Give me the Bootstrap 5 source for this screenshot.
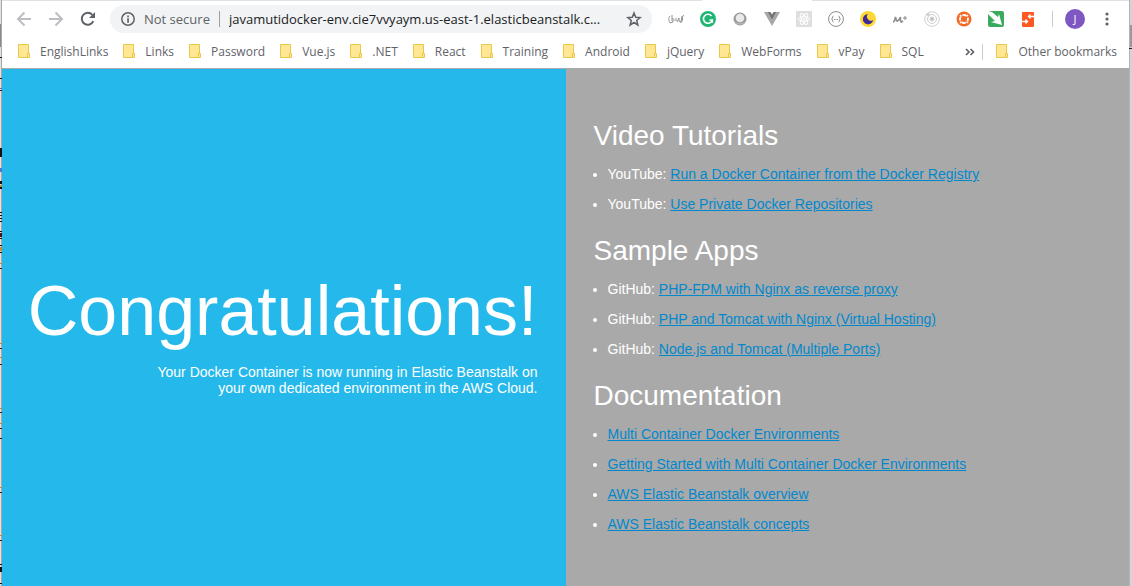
<!DOCTYPE html>
<html lang="en">
<head>
<meta charset="utf-8">
<meta name="viewport" content="width=device-width, initial-scale=1">
<title>Congratulations</title>
<link href="https://cdn.jsdelivr.net/npm/bootstrap@5.3.0/dist/css/bootstrap.min.css" rel="stylesheet">
<style>
  body { font-family: "Liberation Sans", Arial, sans-serif; font-size: 14px; line-height: 16px; background: #dcdcdc; }
  .edge { width: 2px; overflow: hidden; }
  .edge-left { background: linear-gradient(90deg, #e2e2e2 50%, #a8a8a8 50%); }
  .edge-right { width: 3px; background: linear-gradient(90deg, #b4b4b4 1px, #d4d4d4 1px); }
  .edge svg { display: block; }
  .chrome { font-family: "Open Sans", "Noto Sans", sans-serif; border-bottom: 1px solid #a9a9a9; color: #5f6368; }
  .tabs { height: 1px; background: #dee1e6; }
  .tabs span { width: 110px; margin-right: 317px; background: #fff; }
  .toolbar { height: 36px; padding-left: 14px; padding-right: 14px; }
  .bar-btn { width: 16px; height: 16px; border: 0; padding: 0; background: none; display: flex; color: #5f6368; flex: none; }
  .bar-btn:disabled { color: #bcbec1; }
  .nav-group { gap: 16px; }
  .omnibox { height: 28px; border-radius: 14px; background: #f1f3f4; margin-left: 14px; padding: 0 10px; font-size: 13px; }
  .omnibox .rule { width: 1px; height: 16px; background: #9aa0a6; margin: 0 9px; }
  .omnibox input { border: 0; padding: 0; background: none; color: #202124; min-width: 0; outline: 0; }
  .exts { gap: 16px; margin-left: 16px; }
  .vline { width: 1px; height: 16px; background: #c8cacd; }
  .avatar { width: 20px; height: 20px; border-radius: 50%; border: 0; padding: 0; background: #7e57c2; color: #fff; font-size: 11px; line-height: 20px; margin: 0 14px 0 12px; }
  .marks { height: 30px; padding: 0 12px 0 15px; font-size: 12px; margin-bottom: 1px; }
  .marks a { color: #5f6368; text-decoration: none; gap: 9px; }
  .marks-list { gap: 14px; }
  .folder { width: 14px; height: 14px; flex: none; }
  .hero { background: #24b8eb; padding: 12px 28px 0; }
  .hero h1 { font-size: 70px; line-height: 80px; margin-bottom: 13px; font-weight: 400; }
  .hero p { max-width: 392px; }
  .info { background: #a9a9a9; padding: 50px 28px 28px; }
  .info h2 { font-size: 28px; line-height: 34px; font-weight: 400; margin: 0 0 13px; }
  .info ul { padding-left: 14px; margin: 0 0 22px; }
  .info li + li { margin-top: 14px; }
  .info a { color: #0188cc; }
</style>
</head>
<body class="d-flex min-vh-100">
<svg width="0" height="0" class="position-absolute" aria-hidden="true">
  <symbol id="folder" viewBox="0 0 14 14"><path d="M1.500 .5h10v9h1v4h-11z" fill="#ffe794" stroke="#e8c74b"/><path d="M10.500 13V9.500h1" fill="none" stroke="#e8c74b"/></symbol>
</svg>

<div class="edge edge-left flex-shrink-0" aria-hidden="true">
  <svg width="2" height="586" shape-rendering="crispEdges">
    <path fill="#8a8a8a" d="M0 24h1v23h-1z"/>
    <path fill="#111" d="M0 57h2v1h-2zM0 78h2v1h-2zM0 148h2v9h-2zM0 181h2v3h-2zM0 187h2v2h-2zM0 212h2v1h-2zM0 215h2v1h-2zM0 218h2v1h-2zM0 221h2v1h-2zM0 231h2v1h-2zM0 238h2v1h-2zM0 245h2v1h-2zM0 252h2v1h-2zM0 438h2v1h-2zM0 564h2v1h-2zM0 567h2v5h-2zM0 583h2v1h-2z"/>
    <path fill="#501018" d="M0 90h2v1h-2zM0 233h2v4h-2zM0 268h2v1h-2zM0 348h2v1h-2zM0 364h2v1h-2zM0 412h2v1h-2zM0 428h2v1h-2zM0 492h2v1h-2zM0 540h2v1h-2z"/>
    <path fill="#c98a2c" d="M0 185h2v2h-2zM0 247h2v4h-2zM0 263h2v1h-2zM0 343h2v1h-2zM0 357h2v1h-2zM0 408h2v1h-2zM0 423h2v1h-2zM0 487h2v1h-2zM0 535h2v1h-2z"/>
    <path fill="#4a7ad0" d="M0 88h2v1h-2zM0 168h2v4h-2z"/>
  </svg>
</div>

<div class="flex-grow-1 d-flex flex-column overflow-hidden">
  <header class="chrome bg-white">
    <div class="tabs d-flex justify-content-end"><span></span></div>
    <div class="toolbar d-flex align-items-center">
      <div class="nav-group d-flex">
        <button class="bar-btn" disabled aria-label="Back"><svg width="16" height="16" fill="none" stroke="currentColor" stroke-width="2"><path d="M15 8H2.500M8.500 1.500L2 8l6.500 6.500"/></svg></button>
        <button class="bar-btn" disabled aria-label="Forward"><svg width="16" height="16" fill="none" stroke="currentColor" stroke-width="2"><path d="M1 8h12.500M7.500 1.500L14 8l-6.500 6.500"/></svg></button>
        <button class="bar-btn" aria-label="Reload"><svg width="16" height="16"><path d="M13.300 10.200A6 6 0 1 1 12.300 3.800" fill="none" stroke="currentColor" stroke-width="2"/><path d="M15 1v6H9z" fill="currentColor"/></svg></button>
      </div>
      <div class="omnibox flex-grow-1 d-flex align-items-center">
        <svg class="flex-shrink-0 me-2" width="16" height="16"><circle cx="8" cy="8" r="6.200" fill="none" stroke="#5f6368" stroke-width="1.500"/><path d="M7.200 4.500h1.700v1.700H7.200zM7.200 7.200h1.700v4.500H7.200z" fill="#5f6368"/></svg>
        <label for="url" class="text-nowrap">Not secure</label>
        <span class="rule flex-shrink-0"></span>
        <input id="url" class="flex-grow-1" type="text" value="javamutidocker-env.cie7vvyaym.us-east-1.elasticbeanstalk.c...">
        <button class="bar-btn ms-2" aria-label="Bookmark this page"><svg width="16" height="16" fill="none" stroke="currentColor" stroke-width="1.500"><path d="M8 2l1.700 4.300 4.500.3-3.500 2.900 1.200 4.500L8 11.500 4.100 14l1.200-4.500L1.800 6.600l4.500-.3z"/></svg></button>
      </div>
      <div class="exts d-flex align-items-center">
        <button class="bar-btn" aria-label="JSON viewer"><svg width="16" height="16" fill="none" stroke="#8e8e8e"><path d="M2 5c-2 2-1 5 0 7M4 4v6c1 1 2 0 2-1S5 7 4 8M8 7v3M9 11l2-4M11 7v3l2 1 1-6M15.500 4c-1 2-1 2-1 4s-1 3-2 4M2 12l3-1"/></svg></button>
        <button class="bar-btn" aria-label="Grammar checker"><svg width="16" height="16"><circle cx="8" cy="8" r="8" fill="#1fb573"/><path d="M11.500 5A4.500 4.500 0 1 0 12.300 9H9.500M12.300 8.500v3.200" fill="none" stroke="#fff" stroke-width="1.600"/></svg></button>
        <button class="bar-btn" aria-label="Colour picker"><svg width="16" height="16"><circle cx="8" cy="8" r="6.500" fill="#999"/><circle cx="8" cy="7" r="4.300" fill="#e9e9e9"/><path d="M2.500 10a6 6 0 0 0 11 0c-3 3-8 3-11 0" fill="#b9b9b9"/></svg></button>
        <button class="bar-btn" aria-label="Vue devtools"><svg width="16" height="16"><path d="M0 1h3.500L8 9l4.500-8H16L8 15z" fill="#a7a7a7"/><path d="M3.500 1h3L8 3.600 9.500 1h3L8 9z" fill="#747474"/></svg></button>
        <button class="bar-btn" aria-label="React devtools"><svg width="16" height="16"><path d="M0 0h16v16H0z" fill="#dedede"/><g fill="none" stroke="#fff"><ellipse cx="8" cy="8" rx="6" ry="2.300"/><ellipse cx="8" cy="8" rx="6" ry="2.300" transform="rotate(60 8 8)"/><ellipse cx="8" cy="8" rx="6" ry="2.300" transform="rotate(120 8 8)"/></g><circle cx="8" cy="8" r="1" fill="#fff"/></svg></button>
        <button class="bar-btn" aria-label="JSON formatter"><svg width="16" height="16" fill="none" stroke="#8a8a8a"><circle cx="8" cy="8" r="7.400"/><path d="M5.500 5Q4.500 5 4.500 7L3.500 8l1 1q0 2 1 2M10.500 5q1 0 1 2l1 1-1 1q0 2-1 2"/><path d="M6 8.500h4" stroke-dasharray="1 .5"/></svg></button>
        <button class="bar-btn" aria-label="Dark mode"><svg width="16" height="16"><circle cx="8" cy="8" r="8" fill="#fdd835"/><path d="M8 3a5.200 5.200 0 1 0 5.200 6A4 4 0 0 1 8 3" fill="#3f2b96"/></svg></button>
        <button class="bar-btn" aria-label="Momentum"><svg width="16" height="16" fill="none" stroke="#8b8b8b"><path d="M1 11q1.500 0 2.500-5 1 5 2 4 2-1 3-4-.5 5 1 5l1.500-1" stroke-width="1.600"/><path d="M11 7h4M13 5v4"/></svg></button>
        <button class="bar-btn" aria-label="Orbit"><svg width="16" height="16" fill="none" stroke="#cfcfcf"><circle cx="8" cy="8" r="7.300"/><circle cx="8" cy="8" r="4.500"/><circle cx="8" cy="8" r="2" fill="#c4c4c4"/><circle cx="4" cy="3.500" r="1" fill="#bbb"/></svg></button>
        <button class="bar-btn" aria-label="Hub"><svg width="16" height="16"><circle cx="8" cy="8" r="7.500" fill="#f46a25"/><circle cx="8" cy="8" r="4" fill="none" stroke="#fff" stroke-width="1.800" stroke-dasharray="4.200 2.083" stroke-dashoffset="2.100"/><path d="M4 4l1.500 1.500M12 4l-1.500 1.500M4 12l1.500-1.500M12 12l-1.500-1.500" stroke="#fff" stroke-width="1.500"/></svg></button>
        <button class="bar-btn" aria-label="Arrow"><svg width="16" height="16"><rect width="16" height="16" rx="2" fill="#3aab5c"/><path d="M0 3V0l4 1 6 5 1-3 3 11-11-3 4-1z" fill="#fff"/></svg></button>
        <button class="bar-btn" aria-label="Switcher"><svg width="16" height="16"><rect x="2" y="1" width="12" height="15" rx="1" fill="#ff5722"/><path d="M14 5.500H8.500M10.500 3.500l-2 2 2 2M2 10.500h5.500M5.500 8.500l2 2-2 2" fill="none" stroke="#fff" stroke-width="1.400"/></svg></button>
        <span class="vline"></span>
      </div>
      <button class="avatar flex-shrink-0" aria-label="Profile">J</button>
      <button class="bar-btn" aria-label="Menu"><svg width="16" height="16" fill="#5f6368"><circle cx="8" cy="3" r="1.600"/><circle cx="8" cy="8" r="1.600"/><circle cx="8" cy="13" r="1.600"/></svg></button>
    </div>
    <nav class="marks d-flex align-items-center text-nowrap" aria-label="Bookmarks">
      <div class="marks-list d-flex">
        <a href="#" class="d-flex"><svg class="folder"><use href="#folder"/></svg>EnglishLinks</a>
        <a href="#" class="d-flex"><svg class="folder"><use href="#folder"/></svg>Links</a>
        <a href="#" class="d-flex"><svg class="folder"><use href="#folder"/></svg>Password</a>
        <a href="#" class="d-flex"><svg class="folder"><use href="#folder"/></svg>Vue.js</a>
        <a href="#" class="d-flex"><svg class="folder"><use href="#folder"/></svg>.NET</a>
        <a href="#" class="d-flex"><svg class="folder"><use href="#folder"/></svg>React</a>
        <a href="#" class="d-flex"><svg class="folder"><use href="#folder"/></svg>Training</a>
        <a href="#" class="d-flex"><svg class="folder"><use href="#folder"/></svg>Android</a>
        <a href="#" class="d-flex"><svg class="folder"><use href="#folder"/></svg>jQuery</a>
        <a href="#" class="d-flex"><svg class="folder"><use href="#folder"/></svg>WebForms</a>
        <a href="#" class="d-flex"><svg class="folder"><use href="#folder"/></svg>vPay</a>
        <a href="#" class="d-flex"><svg class="folder"><use href="#folder"/></svg>SQL</a>
      </div>
      <button class="bar-btn ms-auto me-1" aria-label="More bookmarks"><svg width="16" height="16" fill="none" stroke="currentColor" stroke-width="1.700"><path d="M4 5l3 3-3 3M8.500 5l3 3-3 3"/></svg></button>
      <span class="vline me-2"></span>
      <a href="#" class="d-flex ms-1"><svg class="folder"><use href="#folder"/></svg>Other bookmarks</a>
    </nav>
  </header>

  <main class="row g-0 flex-grow-1 text-white">
    <section class="hero col-6 d-flex flex-column justify-content-center align-items-end text-end">
      <h1>Congratulations!</h1>
      <p class="mb-0">Your Docker Container is now running in Elastic Beanstalk on your own dedicated environment in the AWS Cloud.</p>
    </section>
    <section class="info col-6">
      <h2>Video Tutorials</h2>
      <ul>
        <li>YouTube: <a href="#">Run a Docker Container from the Docker Registry</a></li>
        <li>YouTube: <a href="#">Use Private Docker Repositories</a></li>
      </ul>
      <h2>Sample Apps</h2>
      <ul>
        <li>GitHub: <a href="#">PHP-FPM with Nginx as reverse proxy</a></li>
        <li>GitHub: <a href="#">PHP and Tomcat with Nginx (Virtual Hosting)</a></li>
        <li>GitHub: <a href="#">Node.js and Tomcat (Multiple Ports)</a></li>
      </ul>
      <h2>Documentation</h2>
      <ul class="mb-0">
        <li><a href="#">Multi Container Docker Environments</a></li>
        <li><a href="#">Getting Started with Multi Container Docker Environments</a></li>
        <li><a href="#">AWS Elastic Beanstalk overview</a></li>
        <li><a href="#">AWS Elastic Beanstalk concepts</a></li>
      </ul>
    </section>
  </main>
</div>

<div class="edge edge-right flex-shrink-0" aria-hidden="true">
  <svg width="3" height="586" shape-rendering="crispEdges"><path fill="#999" d="M1 25h2v22h-2z"/><path fill="#222" d="M0 48h3v1h-3z"/></svg>
</div>
<script src="https://cdn.jsdelivr.net/npm/bootstrap@5.3.0/dist/js/bootstrap.bundle.min.js"></script>
</body>
</html>
